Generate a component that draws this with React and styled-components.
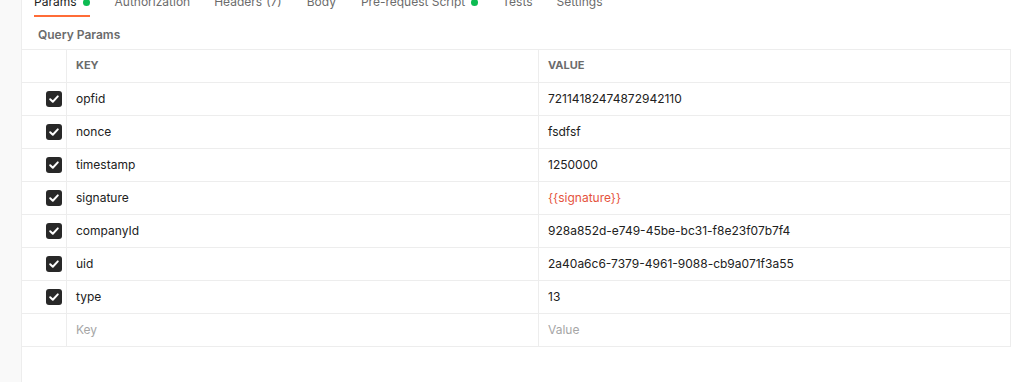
import React from "react";
import styled, { createGlobalStyle } from "styled-components";

const Global = createGlobalStyle`
  html, body { margin: 0; padding: 0; background: #ffffff; }
  body { font-family: Inter, "Noto Sans", sans-serif; -webkit-font-smoothing: antialiased; }
  * { box-sizing: border-box; }
`;

const Page = styled.div`
  display: flex;
  width: 1015px;
  height: 382px;
  overflow: hidden;
  background: #ffffff;
`;

const SideStrip = styled.div`
  flex: 0 0 22px;
  background: #f9f9f9;
  border-right: 1px solid #ededed;
`;

const Main = styled.div`
  flex: 1;
  display: flex;
  flex-direction: column;
  padding-right: 4px;
`;

const TabBar = styled.div`
  display: flex;
  gap: 24px;
  margin-top: -6px;
  padding-left: 12px;
`;

const Tab = styled.div`
  display: flex;
  align-items: center;
  gap: 6px;
  font-size: 12px;
  line-height: 16px;
  color: ${(p) => (p.$active ? "#212121" : "#6b6b6b")};
  padding-bottom: 5px;
  margin-left: ${(p) => p.$shift || 0}px;
  border-bottom: 2px solid ${(p) => (p.$active ? "#ff6c37" : "transparent")};
  white-space: nowrap;
`;

const Count = styled.span`
  margin-left: -2px;
`;

const Dot = styled.span`
  width: 7px;
  height: 7px;
  border-radius: 50%;
  background: #0cbb52;
  display: inline-block;
`;

const SectionTitle = styled.div`
  padding: 10px 0 6px 16px;
  font-size: 12px;
  line-height: 16px;
  font-weight: 600;
  color: #6b6b6b;
`;

const Table = styled.div`
  display: grid;
  grid-template-columns: 44px 472px 1fr;
  border-top: 1px solid #ededed;
`;

const Cell = styled.div`
  height: 33px;
  display: flex;
  align-items: center;
  border-bottom: 1px solid #ededed;
  padding-left: ${(p) => (p.$check ? "0" : "9px")};
  padding-bottom: ${(p) => (p.$check ? "0" : "2px")};
  justify-content: ${(p) => (p.$check ? "flex-end" : "flex-start")};
  padding-right: ${(p) => (p.$check ? "4px" : "0")};
  border-left: ${(p) => (p.$check ? "none" : "1px solid #ededed")};
  border-right: ${(p) => (p.$last ? "1px solid #ededed" : "none")};
  font-size: 12px;
  color: ${(p) =>
    p.$placeholder ? "#a6a6a6" : p.$variable ? "#e5533d" : "#212121"};
  white-space: nowrap;
`;

const HeadCell = styled(Cell)`
  font-size: 11px;
  font-weight: 700;
  color: #6b6b6b;
  text-transform: uppercase;
`;

const Box = styled.span`
  width: 16px;
  height: 16px;
  border-radius: 3px;
  background: #282828;
  display: inline-flex;
  align-items: center;
  justify-content: center;
`;

const Checkbox = () => (
  <Box>
    <svg width="12" height="12" viewBox="0 0 12 12" fill="none">
      <path d="M2.2 6.2 L4.8 8.7 L9.8 3.4" stroke="#ffffff" strokeWidth="2" strokeLinecap="round" strokeLinejoin="round" />
    </svg>
  </Box>
);

const tabs = [
  { label: "Params", dot: true, active: true },
  { label: "Authorization", shift: 1 },
  { label: "Headers", count: "(7)" },
  { label: "Body", shift: 1 },
  { label: "Pre-request Script", dot: true, shift: 1 },
  { label: "Tests" },
  { label: "Settings" },
];

const params = [
  ["opfid", "72114182474872942110"],
  ["nonce", "fsdfsf"],
  ["timestamp", "1250000"],
  ["signature", "{{signature}}", true],
  ["companyId", "928a852d-e749-45be-bc31-f8e23f07b7f4"],
  ["uid", "2a40a6c6-7379-4961-9088-cb9a071f3a55"],
  ["type", "13"],
];

export default function App() {
  return (
    <>
      <Global />
      <Page>
        <SideStrip />
        <Main>
          <TabBar>
            {tabs.map((t) => (
              <Tab key={t.label} $active={t.active} $shift={t.shift}>
                {t.label}
                {t.count && <Count>{t.count}</Count>}
                {t.dot && <Dot />}
              </Tab>
            ))}
          </TabBar>
          <SectionTitle>Query Params</SectionTitle>
          <Table>
            <HeadCell $check />
            <HeadCell>Key</HeadCell>
            <HeadCell $last>Value</HeadCell>
            {params.map(([k, v, isVar]) => (
              <React.Fragment key={k}>
                <Cell $check>
                  <Checkbox />
                </Cell>
                <Cell>{k}</Cell>
                <Cell $last $variable={isVar}>{v}</Cell>
              </React.Fragment>
            ))}
            <Cell $check />
            <Cell $placeholder>Key</Cell>
            <Cell $last $placeholder>Value</Cell>
          </Table>
        </Main>
      </Page>
    </>
  );
}
